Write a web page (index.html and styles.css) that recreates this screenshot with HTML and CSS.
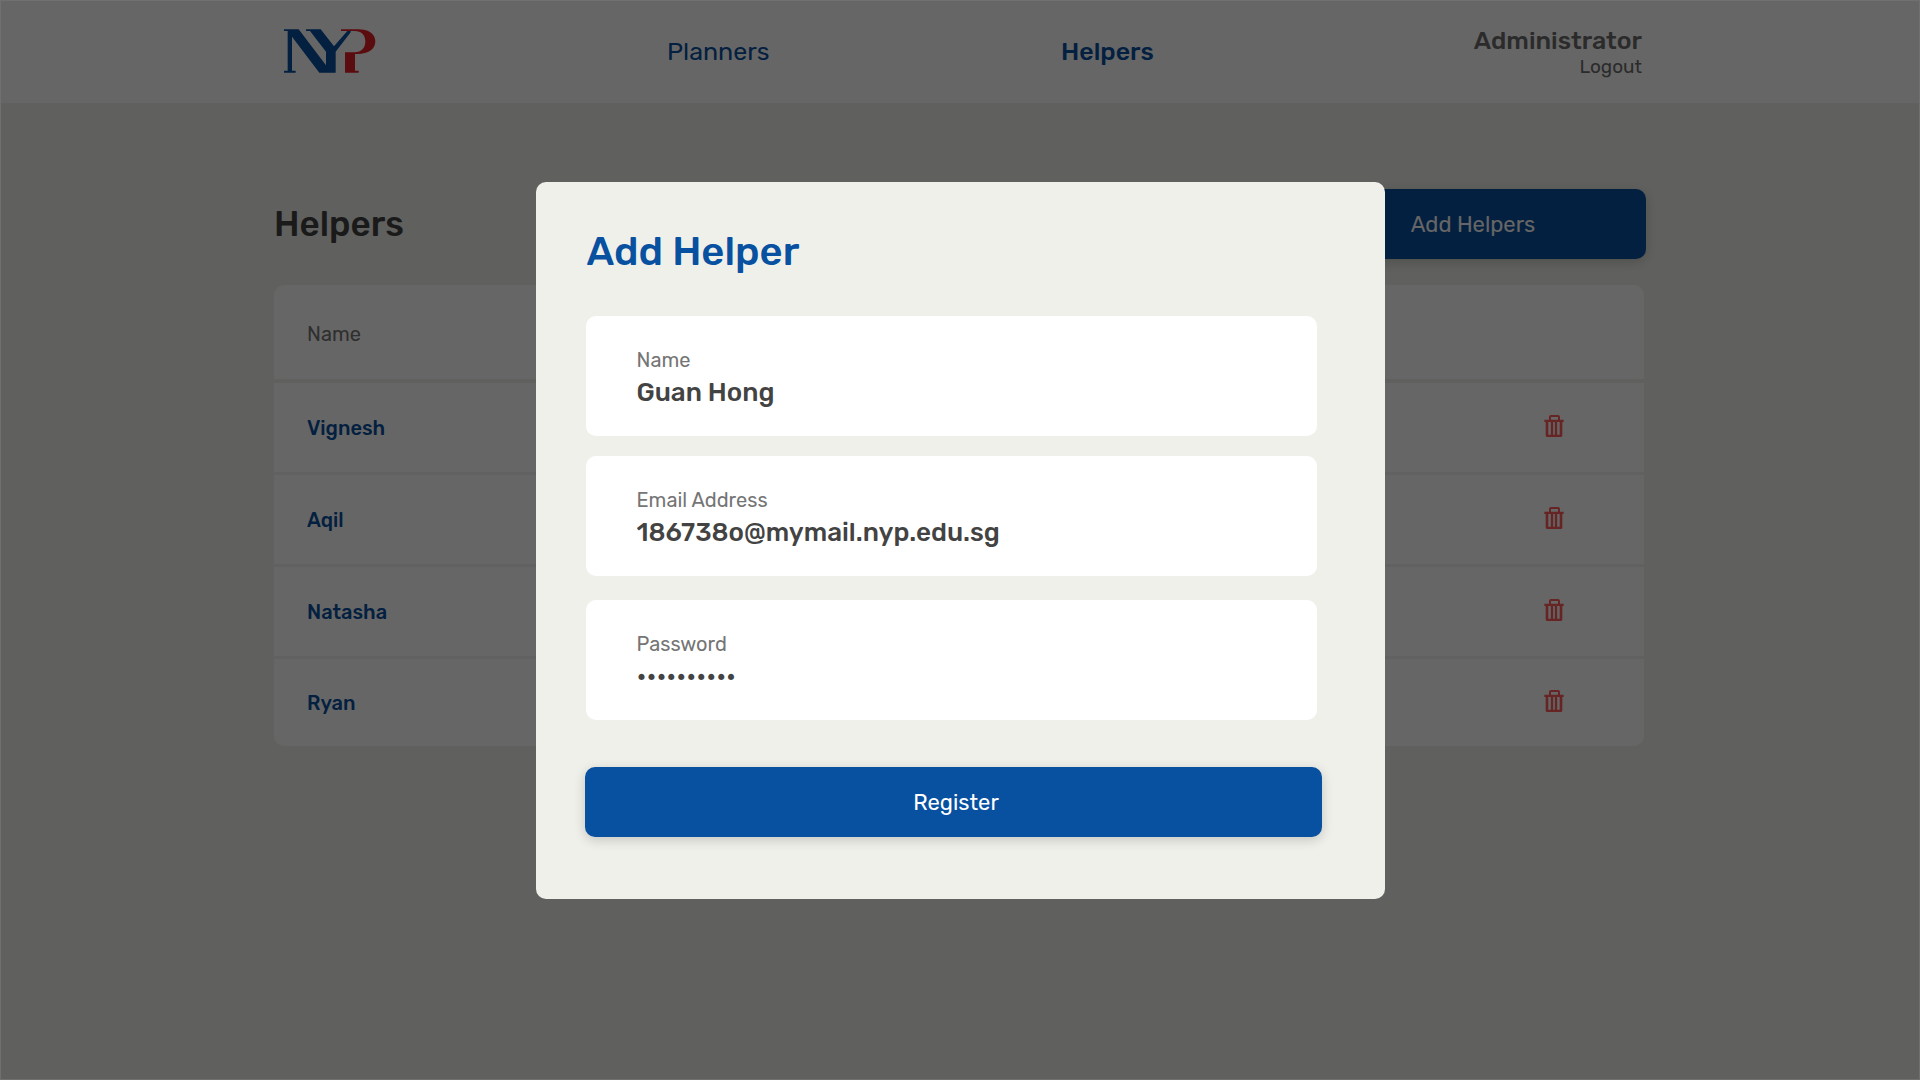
FILE: index.html
```
<!DOCTYPE html>
<html lang="en">
<head>
<meta charset="utf-8">
<title>NYP Helpers</title>
<link rel="stylesheet" href="styles.css">
</head>
<body>
<svg class="sprite" aria-hidden="true">
  <symbol id="trash" viewBox="0 0 60 66">
    <path d="M18 18V6a3 3 0 0 1 3-3h21a3 3 0 0 1 3 3v12" fill="none" stroke="currentColor" stroke-width="6"/>
    <path d="M1 17.500h58M24 20v42M36 20v42" fill="none" stroke="currentColor" stroke-width="7"/>
    <path d="M9 18v42a3 3 0 0 0 3 3h36a3 3 0 0 0 3-3V18" fill="none" stroke="currentColor" stroke-width="8"/>
  </symbol>
</svg>
<header class="topbar">
  <div class="topbar-inner">
    <a class="logo" href="#" aria-label="NYP home">
      <svg viewBox="72 87 276 132" width="92" height="44" aria-hidden="true">
        <path fill="#0850a0" d="M72 88H116L198 196V155L150 93H138V88H182L222 139L262 93H272V97L227 155V218H178L96 110V212H107V218H72V212H83V93H72Z"/>
        <path fill="#e31e26" d="M243 88H294C326 88 346 102 346 124C346 148 326 162 292 162H285V212H296V218H255V157H284C304 157 316 144 316 124C316 104 304 93 284 93H243Z"/>
      </svg>
    </a>
    <nav class="nav">
      <a href="#">Planners</a>
      <a class="current" href="#">Helpers</a>
    </nav>
    <div class="account">
      <span class="account-name">Administrator</span>
      <a href="#">Logout</a>
    </div>
  </div>
</header>
<main class="page">
  <div class="page-head">
    <h1>Helpers</h1>
    <button class="button" type="button">Add Helpers</button>
  </div>
  <table class="helpers">
    <thead>
      <tr><th scope="col">Name</th><th aria-label="Actions"></th></tr>
    </thead>
    <tbody>
      <tr><td>Vignesh</td><td class="action"><button type="button" aria-label="Delete Vignesh"><svg><use href="#trash"/></svg></button></td></tr>
      <tr><td>Aqil</td><td class="action"><button type="button" aria-label="Delete Aqil"><svg><use href="#trash"/></svg></button></td></tr>
      <tr><td>Natasha</td><td class="action"><button type="button" aria-label="Delete Natasha"><svg><use href="#trash"/></svg></button></td></tr>
      <tr><td>Ryan</td><td class="action"><button type="button" aria-label="Delete Ryan"><svg><use href="#trash"/></svg></button></td></tr>
    </tbody>
  </table>
</main>
<div class="overlay">
  <section class="modal" role="dialog" aria-modal="true" aria-labelledby="modal-title">
    <h2 id="modal-title">Add Helper</h2>
    <form class="form">
      <div class="field">
        <label for="name">Name</label>
        <input id="name" type="text" value="Guan Hong">
      </div>
      <div class="field">
        <label for="email">Email Address</label>
        <input id="email" type="email" value="186738o@mymail.nyp.edu.sg">
      </div>
      <div class="field secret">
        <label for="password">Password</label>
        <input id="password" type="password" value="helper1234">
      </div>
      <button class="button" type="submit">Register</button>
    </form>
  </section>
</div>
</body>
</html>
```
FILE: styles.css
```
* {
  box-sizing: border-box;
}

body {
  margin: 0;
  min-height: 100vh;
  background: #f0f0eb;
  color: #434343;
  font-family: Rubik, Inter, sans-serif;
  font-size: 20px;
  line-height: 24px;
}

a {
  color: inherit;
  text-decoration: none;
}

button,
input {
  font: inherit;
}

.sprite {
  position: absolute;
  width: 0;
  height: 0;
}

.topbar {
  background: #fff;
}

.topbar-inner,
.page {
  width: min(1372px, 100% - 48px);
  margin: 0 auto;
}

.topbar-inner {
  display: grid;
  grid-template-columns: 383px 1fr auto;
  align-items: center;
  height: 103px;
  padding: 0 4px 0 10px;
}

.logo,
.logo svg {
  display: block;
}

.logo {
  padding-bottom: 2px;
}

.nav {
  display: grid;
  grid-template-columns: 394px auto;
  justify-content: start;
  color: #0850a0;
  font-size: 25px;
}

.current {
  font-weight: 500;
}

.account {
  display: flex;
  flex-direction: column;
  align-items: flex-end;
  gap: 2px;
  padding-top: 4px;
  color: #6b6b6b;
  font-size: 19px;
}

.account-name {
  font-size: 25px;
  font-weight: 500;
}

.page {
  padding: 86px 0 48px;
}

.page-head {
  display: flex;
  justify-content: space-between;
  align-items: center;
}

h1,
h2 {
  margin: 0;
  font-weight: 500;
}

h1 {
  font-size: 35px;
  line-height: 40px;
}

.button {
  width: 346px;
  height: 70px;
  padding: 2px 0 0;
  border: 0;
  border-radius: 10px;
  background: #0850a0;
  color: #fff;
  font-size: 22px;
  box-shadow: 0 3px 12px rgba(0, 0, 0, 0.18);
}

.helpers {
  width: calc(100% - 2px);
  margin-top: 26px;
  border-collapse: separate;
  border-spacing: 0;
}

th,
td {
  height: 92px;
  padding: 0 33px;
  border-bottom: 3px solid #f3f3f2;
  background: #fff;
  text-align: left;
}

th {
  height: 98px;
  padding-top: 4px;
  border-bottom: 4px solid #f0f0eb;
  color: #757575;
  font-weight: 400;
}

td {
  color: #0850a0;
  font-weight: 500;
}

th:first-child {
  border-top-left-radius: 10px;
}

th:last-child {
  border-top-right-radius: 10px;
}

tr:last-child td {
  height: 87px;
  border-bottom: 0;
}

tr:last-child td:first-child {
  border-bottom-left-radius: 10px;
}

tr:last-child td:last-child {
  border-bottom-right-radius: 10px;
}

.action {
  width: 180px;
  padding: 0 0 4px;
  text-align: center;
}

.action button {
  display: block;
  margin: 0 auto;
  padding: 0;
  border: 0;
  background: none;
  color: #ff5a5a;
}

.action svg {
  display: block;
  width: 20px;
  height: 22px;
}

/* Dims the page behind the dialog */
.overlay {
  position: fixed;
  inset: 0;
  display: flex;
  justify-content: center;
  align-items: center;
  border: 1px solid #707070;
  background: rgba(0, 0, 0, 0.6);
}

.modal {
  width: min(849px, 100% - 32px);
  padding: 48px 63px 62px 49px;
  border-radius: 10px;
  background: #f0f0eb;
}

h2 {
  padding-left: 2px;
  color: #0850a0;
  font-size: 40px;
  line-height: 44px;
}

.form {
  display: flex;
  flex-direction: column;
  gap: 20px;
  margin-top: 42px;
}

.field {
  display: flex;
  flex-direction: column;
  gap: 5px;
  height: 120px;
  margin: 0 5px 0 1px;
  padding: 32px 51px 0;
  border-radius: 10px;
  background: #fff;
}

.field.secret {
  margin-top: 4px;
}

.field label {
  color: #757575;
}

.field input {
  width: 100%;
  height: 32px;
  padding: 0;
  border: 0;
  outline: 0;
  background: none;
  color: #434343;
  font-size: 26px;
  font-weight: 500;
}

.form .button {
  width: 100%;
  margin-top: 27px;
  padding-left: 6px;
}
```
